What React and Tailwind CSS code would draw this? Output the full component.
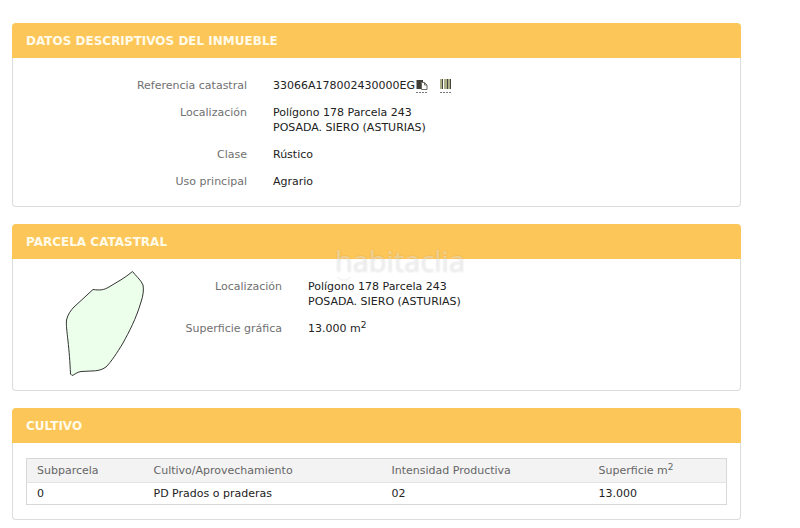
import clsx from "clsx";

const crops = [
  {
    subparcela: "0",
    cultivo: "PD Prados o praderas",
    intensidad: "02",
    superficie: "13.000",
  },
];

const Card = ({ title, children }) => (
  <section>
    <h2 className="flex h-[35px] items-center rounded-t bg-[#fdc659] px-[14px] pt-px text-[12px] leading-[15px] font-bold text-[#fffbe8] uppercase">
      {title}
    </h2>
    <div className="rounded-b border border-t-0 border-[#dcdcdc]">
      {children}
    </div>
  </section>
);

const Row = ({ label, labelClass, children }) => (
  <div className="flex gap-[26px]">
    <dt className={clsx("shrink-0 text-right text-[#707070]", labelClass)}>
      {label}
    </dt>
    <dd>{children}</dd>
  </div>
);

const Squared = () => (
  <sup className="relative -top-1 align-baseline text-[9px] leading-none">2</sup>
);

const CopyIcon = () => (
  <svg className="h-[14px] w-3" viewBox="0 0 12 14" fill="none">
    <path d="M0.5 1h6.5v2.5H5V10H0.5z" fill="#3f3f37" />
    <path d="M5.5 3.5h3l2.5 2.5v4.5H5.5z" fill="#fff" stroke="#6a6a60" />
    <path d="M8.5 3.5v2.5h2.5" stroke="#6a6a60" />
    <path d="M0 13.5h12" stroke="#777" strokeDasharray="2 1" />
  </svg>
);

const BarcodeIcon = () => (
  <svg className="h-[14px] w-3" viewBox="0 0 12 14">
    <path d="M0 0h2v10H0zM4 0h3v10H4zM8 0h2v10H8z" fill="#b0b088" />
    <path d="M2 0h1v10H2zM7 0h1v10H7zM10 0h1v10h-1z" fill="#44443c" />
    <path d="M0 13.5h12" stroke="#777" strokeDasharray="2 1" />
  </svg>
);

const ParcelShape = () => (
  <svg
    className="mt-[11px] ml-[52px] h-[108px] w-20 shrink-0"
    viewBox="0 0 80 108"
    role="img"
    aria-label="Parcela"
  >
    <path
      d="M67.5 1.5 C70 5 76 10 78 15 C79 20 78 26 76 32 C71 49 64 62 58 73 C52 83 46 92 41 97 C37 100 32 101 26 101 L16 101.5 C12 102 9 105 7 105.5 L5.5 104 C5 92 4 80 3 71 C2 62 1 55 1.5 50 C3 44 6 40 9 37 L28 19.5 C35 20.5 39 20 44 17 C52 12 60 8 67.5 1.5 Z"
      fill="#ebffeb"
      stroke="#333"
      strokeWidth="1"
    />
  </svg>
);

const Address = () => (
  <>
    Polígono 178 Parcela 243
    <br />
    POSADA. SIERO (ASTURIAS)
  </>
);

export default function App() {
  return (
    <main className="relative flex min-h-screen flex-col gap-[17px] bg-white pt-[23px] pr-[59px] pb-2 pl-3 font-['DejaVu_Sans',Verdana,sans-serif] text-[11px] leading-[15px] text-[#222]">
      <Card title="Datos descriptivos del inmueble">
        <dl className="flex flex-col gap-3 pt-5 pb-[17px]">
          <Row label="Referencia catastral" labelClass="w-[234px]">
            <span className="flex items-center">
              33066A178002430000EG
              <button type="button" aria-label="Copiar" className="-my-1 ml-px">
                <CopyIcon />
              </button>
              <button
                type="button"
                aria-label="Código de barras"
                className="-my-1 ml-3"
              >
                <BarcodeIcon />
              </button>
            </span>
          </Row>
          <Row label="Localización" labelClass="w-[234px]">
            <Address />
          </Row>
          <Row label="Clase" labelClass="w-[234px]">
            Rústico
          </Row>
          <Row label="Uso principal" labelClass="w-[234px]">
            Agrario
          </Row>
        </dl>
      </Card>

      <Card title="Parcela catastral">
        <div className="flex pb-3">
          <ParcelShape />
          <dl className="flex flex-col gap-3 pt-5">
            <Row label="Localización" labelClass="w-[137px]">
              <Address />
            </Row>
            <Row label="Superficie gráfica" labelClass="w-[137px]">
              13.000 m<Squared />
            </Row>
          </dl>
        </div>
      </Card>

      <Card title="Cultivo">
        <div className="px-[13px] pt-[15px] pb-[14px]">
          <table className="w-full table-fixed border-collapse border border-[#d8d8d8] text-left">
            <thead className="bg-[#f3f3f3] text-[#666]">
              <tr className="h-6 border-b border-[#e4e4e4]">
                <th className="w-[17%] pl-[10px] font-normal">Subparcela</th>
                <th className="w-[34%] pl-2 font-normal">
                  Cultivo/Aprovechamiento
                </th>
                <th className="w-[29%] pl-2 font-normal">
                  Intensidad Productiva
                </th>
                <th className="pl-3 font-normal">
                  Superficie m<Squared />
                </th>
              </tr>
            </thead>
            <tbody>
              {crops.map((crop) => (
                <tr key={crop.subparcela} className="h-[22px]">
                  <td className="pl-[10px]">{crop.subparcela}</td>
                  <td className="pl-2">{crop.cultivo}</td>
                  <td className="pl-2">{crop.intensidad}</td>
                  <td className="pl-3">{crop.superficie}</td>
                </tr>
              ))}
            </tbody>
          </table>
        </div>
      </Card>

      {/* Watermark */}
      <div className="pointer-events-none absolute inset-x-0 top-[245px] flex justify-center select-none">
        <div className="flex flex-col">
          <span className="font-['Open_Sans',sans-serif] text-[29px] leading-8 font-medium text-white/40 [text-shadow:0_0_2px_rgba(0,0,0,0.14)]">
            habitaclia
          </span>
          <svg className="h-[6px] w-[18px]" viewBox="0 0 18 6" fill="none">
            <path d="M2 0Q9 6 16 0" stroke="#f6f6f6" strokeWidth="2" />
          </svg>
        </div>
      </div>
    </main>
  );
}
